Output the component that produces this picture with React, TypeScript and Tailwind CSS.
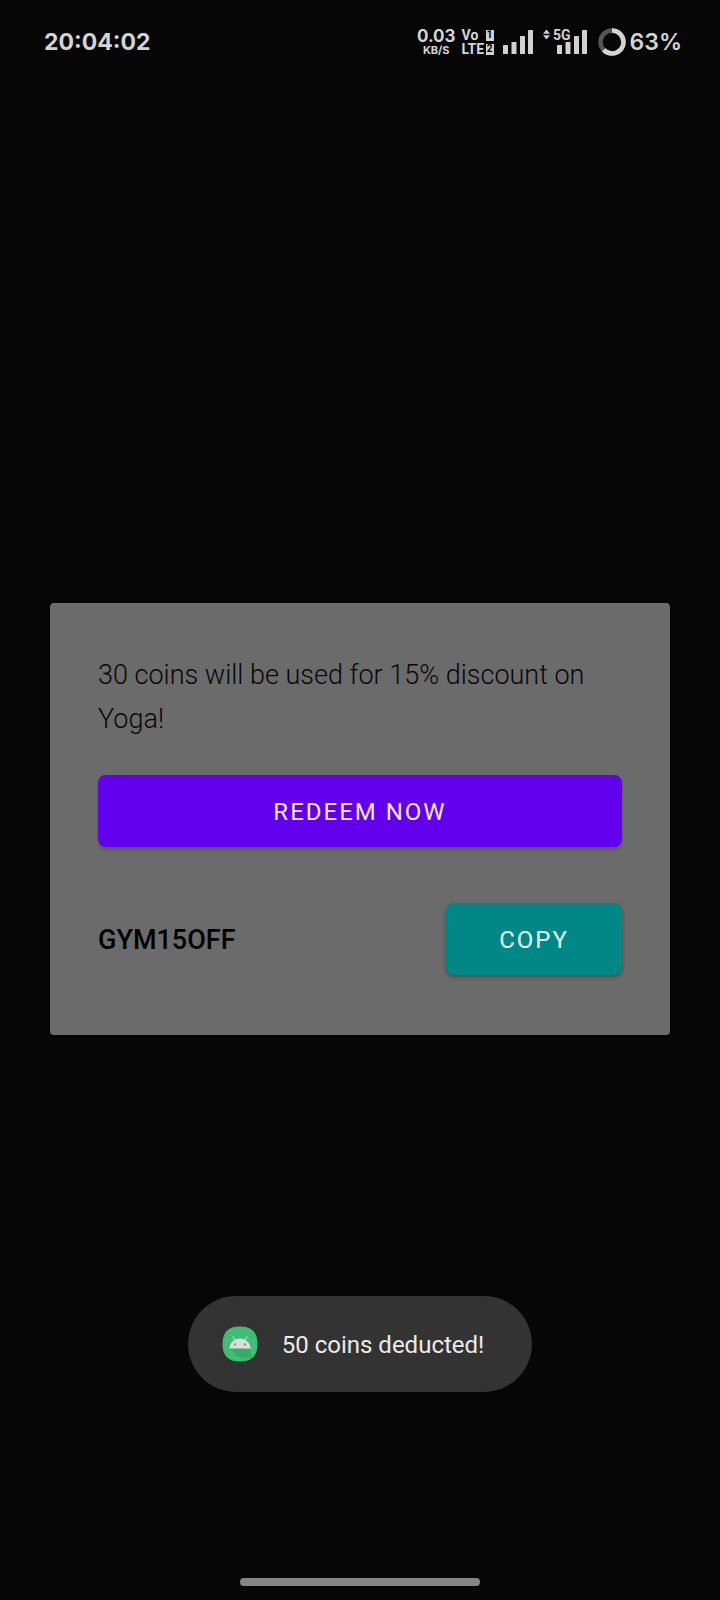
const SANS = "font-[Inter,sans-serif]";

function SignalBars() {
  return (
    <svg aria-hidden="true" className="h-7 w-8 shrink-0" viewBox="0 0 32 28" fill="#d0d0d0">
      <rect x="1" y="17" width="5" height="9" rx="0.6" />
      <rect x="9.500" y="14" width="5" height="12" rx="0.6" />
      <rect x="18" y="8" width="5" height="18" rx="0.6" />
      <rect x="26" y="2" width="5" height="24" rx="0.6" />
    </svg>
  );
}

function FiveGSignal() {
  return (
    <svg aria-label="5G signal" className="h-7 w-[46px] shrink-0" viewBox="0 0 46 28" fill="#d0d0d0">
      <path d="M4.500 1.500 8 5.800H1zM4.500 11.500 8 7.200H1z" />
      <text x="11" y="11.500" fontFamily="'Liberation Sans Narrow', Roboto, sans-serif" fontSize="14" fontWeight="700">5G</text>
      <rect x="15" y="17" width="5" height="9" rx="0.6" />
      <rect x="23.500" y="14" width="5" height="12" rx="0.6" />
      <rect x="32" y="8" width="5" height="18" rx="0.6" />
      <rect x="40" y="2" width="5" height="24" rx="0.6" />
    </svg>
  );
}

function BatteryRing() {
  return (
    <svg aria-hidden="true" className="size-7 shrink-0" viewBox="0 0 28 28" fill="none" strokeWidth="4.500">
      <circle cx="14" cy="14" r="11.500" stroke="#555555" />
      <circle
        cx="14"
        cy="14"
        r="11.500"
        stroke="#d4d4d4"
        pathLength="100"
        strokeDasharray="63 37"
        transform="rotate(-90 14 14)"
      />
    </svg>
  );
}

function AppIcon() {
  return (
    <svg aria-hidden="true" className="size-9 shrink-0" viewBox="0 0 36 36">
      <defs>
        <clipPath id="app-icon-shape">
          <path d="M18 .5C30 .5 35.500 6.500 35.500 18S30 35.500 18 35.500.5 29.500.5 18 6 .5 18 .5Z" />
        </clipPath>
      </defs>
      <g clipPath="url(#app-icon-shape)">
        <rect width="36" height="36" fill="#3dbb73" />
        <path
          d="M4.500 0v36M9 0v36M13.500 0v36M18 0v36M22.500 0v36M27 0v36M31.500 0v36M0 4.500h36M0 9h36M0 13.500h36M0 18h36M0 22.500h36M0 27h36M0 31.500h36"
          stroke="#56c586"
          strokeWidth="0.4"
        />
        <path d="M8 22.500 18 32h12l-2-9.500z" fill="#30a564" opacity="0.7" />
      </g>
      <path d="m13 14-2-3.500M23 14l2-3.500" stroke="#c9e5d5" strokeWidth="0.9" strokeLinecap="round" />
      <path d="M7.300 22.600c.5-6 5-10.200 10.700-10.200s10.200 4.200 10.700 10.200z" fill="#dcdcdc" />
      <circle cx="13" cy="18.500" r="1.200" fill="#969696" />
      <circle cx="23" cy="18.500" r="1.200" fill="#969696" />
    </svg>
  );
}

function StatusBar() {
  return (
    <header className={`flex h-20 items-center justify-between pr-[38px] pl-11 pt-1 text-[#d4d4d4] ${SANS}`}>
      <time className="text-[23px] font-bold leading-7">20:04:02</time>
      <div className="flex items-center">
        <div className="flex flex-col items-center">
          <span className="text-[17px] leading-4 font-bold">0.03</span>
          <span className="text-[11px] leading-3 font-bold">KB/S</span>
        </div>
        <div className="ml-1.5 flex w-8 flex-col text-sm font-bold">
          <span className="flex items-center justify-between leading-[14px] font-[Roboto,sans-serif]">
            Vo
            <span className="flex h-[11px] w-2 items-center justify-center bg-[#d0d0d0] text-[10px] leading-none text-black">1</span>
          </span>
          <span className="flex items-center justify-between leading-[14px] font-[Roboto,sans-serif]">
            LTE
            <span className="flex h-[11px] w-2 items-center justify-center bg-[#d0d0d0] text-[10px] leading-none text-black">2</span>
          </span>
        </div>
        <div className="ml-2 flex items-center gap-2">
          <SignalBars />
          <FiveGSignal />
        </div>
        <div className="ml-2.5 flex items-center gap-1">
          <BatteryRing />
          <span className="text-[23px] font-semibold leading-7">63%</span>
        </div>
      </div>
    </header>
  );
}

export default function App() {
  return (
    <div className="relative flex min-h-screen flex-col bg-[#060606]">
      <StatusBar />

      <main className="flex flex-1 items-center justify-center px-[50px]">
        <section
          role="dialog"
          aria-label="Redeem coins"
          className="w-full rounded-sm bg-[#6b6b6b] px-12 pt-[50px] pb-[60px] font-[Roboto,sans-serif]"
        >
          <p className="text-[27px] leading-[44px] font-light text-[#080808]">
            30 coins will be used for 15% discount on Yoga!
          </p>
          <button
            type="button"
            className="mt-[34px] h-[72px] w-full rounded-lg bg-[#6200ee] pt-0.5 text-2xl tracking-[2px] text-[#f3e8ff] shadow-[0_2px_3px_rgba(0,0,0,0.2)]"
          >
            REDEEM NOW
          </button>
          <div className="mt-14 flex items-center justify-between">
            <span className="pt-0.5 text-[27px] leading-9 font-medium text-black">GYM15OFF</span>
            <button
              type="button"
              className="h-[72px] w-44 rounded-lg bg-[#018786] pt-0.5 text-2xl tracking-[2px] text-[#e4ffff] shadow-[0_2px_4px_rgba(0,0,0,0.3)]"
            >
              COPY
            </button>
          </div>
        </section>
      </main>

      <footer className="flex h-[42px] items-start justify-center pt-5">
        <div className="h-2 w-60 rounded-full bg-[#858585]" />
      </footer>

      <div className="absolute inset-x-0 bottom-52 flex justify-center">
        <div
          role="status"
          className="flex h-24 items-center gap-6 rounded-full bg-[#333333] pr-12 pl-[34px] font-[Roboto,sans-serif] text-2xl text-[#ebebeb]"
        >
          <AppIcon />
          <span className="pt-0.5">50 coins deducted!</span>
        </div>
      </div>
    </div>
  );
}
